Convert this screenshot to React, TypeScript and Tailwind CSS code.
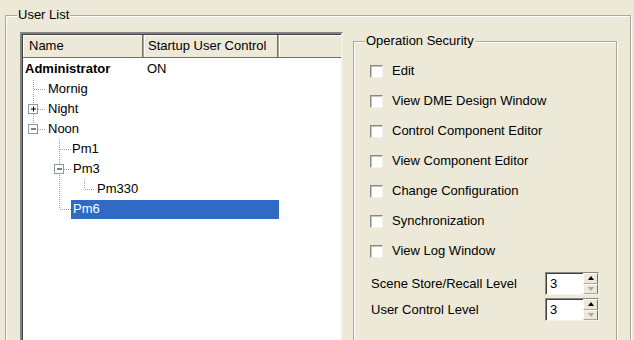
import React from 'react';

const FONT = { fontFamily: '"Liberation Sans", Arial, sans-serif' };

const perms = [
  'Edit',
  'View DME Design Window',
  'Control Component Editor',
  'View Component Editor',
  'Change Configuration',
  'Synchronization',
  'View Log Window',
];

type Row = { name: string; indent: number; value?: string; bold?: boolean; selected?: boolean };

const rows: Row[] = [
  { name: 'Administrator', indent: 3, value: 'ON', bold: true },
  { name: 'Mornig', indent: 26 },
  { name: 'Night', indent: 26 },
  { name: 'Noon', indent: 26 },
  { name: 'Pm1', indent: 50 },
  { name: 'Pm3', indent: 51 },
  { name: 'Pm330', indent: 75 },
  { name: 'Pm6', indent: 49, selected: true },
];

function TreeLines() {
  const dot = { stroke: '#a0a0a0', strokeWidth: 1, strokeDasharray: '1 1' };
  const box = (cx: number, cy: number, plus: boolean) => (
    <g>
      <rect x={cx - 4.5} y={cy - 4.5} width={9} height={9} fill="#fff" stroke="#8c9aa8" />
      <line x1={cx - 2} y1={cy} x2={cx + 3} y2={cy} stroke="#000" />
      {plus && <line x1={cx + 0.5} y1={cy - 2.5} x2={cx + 0.5} y2={cy + 2.5} stroke="#000" />}
    </g>
  );
  return (
    <svg className="absolute left-0 top-0 pointer-events-none" width="120" height="170">
      {/* level 1 */}
      <line x1="11.5" y1="21" x2="11.5" y2="70" {...dot} />
      <line x1="12" y1="30.5" x2="24" y2="30.5" {...dot} />
      <line x1="16" y1="50.5" x2="24" y2="50.5" {...dot} />
      <line x1="16" y1="70.5" x2="24" y2="70.5" {...dot} />
      {/* level 2 */}
      <line x1="37.5" y1="80" x2="37.5" y2="150" {...dot} />
      <line x1="38" y1="90.5" x2="49" y2="90.5" {...dot} />
      <line x1="42" y1="110.5" x2="49" y2="110.5" {...dot} />
      <line x1="38" y1="150.5" x2="49" y2="150.5" {...dot} />
      {/* level 3 */}
      <line x1="62.5" y1="120" x2="62.5" y2="130" {...dot} />
      <line x1="63" y1="130.5" x2="73" y2="130.5" {...dot} />
      {box(11, 50, true)}
      {box(11, 70, false)}
      {box(37, 110, false)}
    </svg>
  );
}

function Checkbox() {
  return (
    <span className="w-[13px] h-[13px] bg-white border border-t-[#8a8a80] border-l-[#8a8a80] border-r-[#f4f3ee] border-b-[#f4f3ee] shadow-[inset_1px_1px_0_#c8c5b8]" />
  );
}

function Spin({ value }: { value: string }) {
  return (
    <div className="flex w-[54px] h-[23px] bg-white border border-t-[#8a8a80] border-l-[#8a8a80] border-r-[#f4f3ee] border-b-[#f4f3ee] shadow-[inset_1px_1px_0_#404040]">
      <span className="flex-1 pl-[4px] leading-[21px] text-[13px] text-black">{value}</span>
      <div className="flex flex-col w-[15px] h-full">
        <div className="flex-1 flex items-center justify-center bg-[#ECE9D8] border border-t-white border-l-white border-r-[#716F64] border-b-[#ACA899]">
          <span className="w-0 h-0 border-l-[3.5px] border-r-[3.5px] border-b-[4px] border-l-transparent border-r-transparent border-b-black" />
        </div>
        <div className="flex-1 flex items-center justify-center bg-[#ECE9D8] border border-t-white border-l-white border-r-[#716F64] border-b-[#ACA899]">
          <span className="w-0 h-0 border-l-[3.5px] border-r-[3.5px] border-t-[4px] border-l-transparent border-r-transparent border-t-[#ACA899]" />
        </div>
      </div>
    </div>
  );
}

export default function App() {
  return (
    <div className="w-[634px] h-[340px] bg-[#ECE9D8] overflow-hidden pt-[15px] pl-[5px] text-[13px] text-black" style={FONT}>
      {/* User List group */}
      <div className="relative w-[626px] h-[360px] border border-[#ACA899] shadow-[inset_1px_1px_0_#fff,1px_1px_0_#fff] pl-[14px] pt-[16px] flex">
        <span className="absolute left-[11px] top-[-9px] px-[1px] bg-[#ECE9D8] leading-[16px]">User List</span>

        {/* list view */}
        <div className="w-[323px] h-[340px] bg-white border-2 border-t-[#848284] border-l-[#848284] border-r-[#f0efe8] border-b-[#f0efe8] shadow-[inset_1px_1px_0_#404040] flex flex-col">
          <div className="flex h-[23px] shrink-0 ml-[1px] mt-[1px] bg-[#ECE9D8] border-b border-[#716F64]">
            <div className="w-[121px] flex items-center pl-[6px] border-r border-[#ACA899] shadow-[inset_-1px_0_0_#716F64,inset_1px_1px_0_#fff]">Name</div>
            <div className="w-[135px] flex items-center pl-[4px] border-r border-[#ACA899] shadow-[inset_-1px_0_0_#716F64,inset_1px_1px_0_#fff]">Startup User Control</div>
            <div className="flex-1 shadow-[inset_1px_1px_0_#fff]" />
          </div>
          <div className="relative flex flex-col pt-[1px]">
            <div className="relative">
              <TreeLines />
              {rows.map((r) => (
                <div key={r.name} className="h-[20px] flex items-center">
                  {r.selected ? (
                    <div className="ml-[49px] w-[208px] h-[19px] bg-[#316AC5] text-white flex items-center pl-[2px]">{r.name}</div>
                  ) : (
                    <>
                      <span className={`w-[125px] shrink-0 ${r.bold ? 'font-bold' : ''}`} style={{ paddingLeft: r.indent }}>
                        {r.name}
                      </span>
                      {r.value && <span>{r.value}</span>}
                    </>
                  )}
                </div>
              ))}
            </div>
          </div>
        </div>

        {/* Operation Security group */}
        <div className="relative ml-[10px] mt-[9px] w-[264px] h-[320px] border border-[#ACA899] shadow-[inset_1px_1px_0_#fff,1px_1px_0_#fff] pl-[16px] pt-[14px] flex flex-col">
          <span className="absolute left-[11px] top-[-9px] px-[1px] bg-[#ECE9D8] leading-[16px]">Operation Security</span>
          {perms.map((p) => (
            <div key={p} className="h-[30px] flex items-center gap-[9px]">
              <Checkbox />
              <span>{p}</span>
            </div>
          ))}
          <div className="mt-[6px] flex items-center h-[23px]">
            <span className="w-[175px] pl-[1px]">Scene Store/Recall Level</span>
            <Spin value="3" />
          </div>
          <div className="mt-[3px] flex items-center h-[23px]">
            <span className="w-[175px] pl-[1px]">User Control Level</span>
            <Spin value="3" />
          </div>
        </div>
      </div>
    </div>
  );
}
